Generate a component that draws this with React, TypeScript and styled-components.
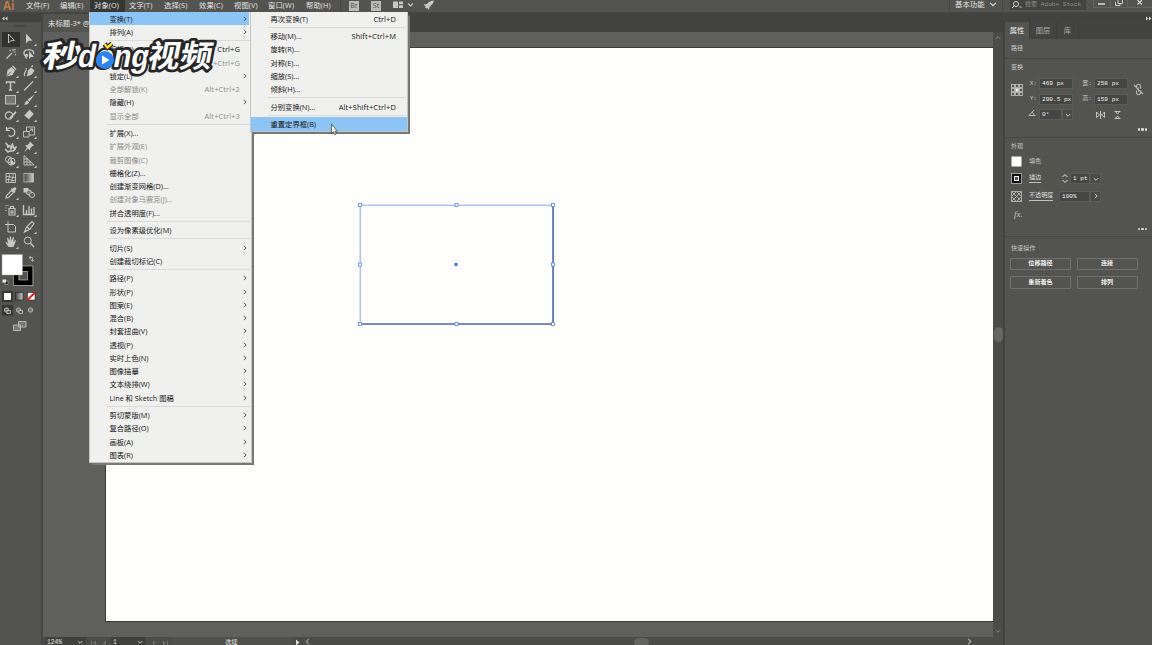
import React from "react";
import styled, { createGlobalStyle } from "styled-components";

const ui = `"Open Sans", "Noto Sans CJK SC", sans-serif`;
const pixel = `"Liberation Mono", "Noto Sans CJK SC", monospace`;

const GlobalStyle = createGlobalStyle`
  * { box-sizing: border-box; }
  html, body { margin: 0; height: 100%; overflow: hidden; background: #535350; }
  body { font-family: ${ui}; font-size: 7.3px; color: #e4e4e2; }
`;

const Window = styled.div`
  position: relative;
  display: flex;
  flex-direction: column;
  width: 1152px;
  height: 645px;
  overflow: hidden;
  background: #535350;
`;

/* ---------- top bar ---------- */
const TopBar = styled.header`
  display: flex;
  height: 14px;
  flex: none;
  border-bottom: 2px solid #444442;
  line-height: 11px;
  white-space: nowrap;
`;
const Logo = styled.div`
  width: 22px;
  padding-left: 3px;
  font: bold 11.5px/11px "Open Sans", sans-serif;
  color: #bd7a4e;
`;
const TopItem = styled.div<{ $w: number; $open?: boolean }>`
  width: ${(p) => p.$w}px;
  padding-left: 4px;
  height: 12px;
  letter-spacing: 0.1px;
  background: ${(p) => (p.$open ? "#363634" : "transparent")};
`;
const AppTile = styled.div`
  width: 10px;
  height: 10px;
  margin: 1px 12px 0 0;
  background: #bcbcba;
  color: #4c4c4a;
  font-size: 7px;
  line-height: 10px;
  text-align: center;
`;
const Divider = styled.div<{ $l: number; $r: number }>`
  width: 1px;
  height: 12px;
  margin: 0 ${(p) => p.$r}px 0 ${(p) => p.$l}px;
  background: #474745;
`;
const Spacer = styled.div`
  flex: 1;
`;
const Workspace = styled.div`
  width: 34px;
  font-size: 7.4px;
  line-height: 9px;
`;
const Search = styled.div`
  display: flex;
  width: 76px;
  height: 10px;
  margin-right: 7px;
  background: #434341;
  color: #8e8e8c;
  font: 6.1px/9px ${pixel};
  gap: 3px;
  padding-left: 1px;
`;
const WinButtons = styled.div`
  display: flex;
  width: 59px;
  height: 8px;
`;
const WinButton = styled.div<{ $w: number }>`
  width: ${(p) => p.$w}px;
  display: flex;
  justify-content: center;
  border: solid #646461;
  border-width: 0 0 1px 1px;
`;

/* ---------- body ---------- */
const Body = styled.div`
  display: flex;
  flex: 1;
  min-height: 0;
`;
const ToolPanel = styled.aside`
  width: 43px;
  border-right: 2px solid #444442;
`;
const PanelTop = styled.div<{ $end?: boolean }>`
  display: flex;
  justify-content: ${(p) => (p.$end ? "flex-end" : "flex-start")};
  height: 8px;
  padding: 2px 0 0 2px;
  background: #424240;
`;
const Grip = styled.div`
  width: 12px;
  height: 2px;
  margin: 3px 0 5px 14px;
  background: #454543;
`;
const ToolGroup = styled.div`
  display: grid;
  grid-template-columns: 18px 18px;
  grid-auto-rows: 14.6px;
  margin-left: 1.5px;
  padding-bottom: 0.8px;
  margin-bottom: 0.8px;
  border-bottom: 1px solid #4d4d4b;
`;
const Tool = styled.div<{ $on?: boolean }>`
  display: flex;
  align-items: center;
  justify-content: center;
  background: ${(p) => (p.$on ? "#313130" : "transparent")};
`;
const Center = styled.main`
  display: flex;
  flex-direction: column;
  width: 960px;
`;
const TabStrip = styled.div`
  height: 18px;
  background: #424240;
`;
const DocTab = styled.div`
  width: 90px;
  height: 18px;
  padding-left: 5px;
  background: #535350;
  line-height: 19px;
  font-size: 7.4px;
  white-space: nowrap;
`;
const Stage = styled.div`
  display: flex;
  height: 605px;
`;
const Canvas = styled.div`
  width: 950px;
  padding: 15px 0 0 62px;
  background: #5f5f5d;
`;
const Artboard = styled.div`
  position: relative;
  width: 888px;
  height: 575px;
  border: solid #3c3c3a;
  border-width: 1px 0 1px 1px;
  background: #fefefd;
`;
const Selection = styled.svg`
  position: absolute;
  left: 248px;
  top: 151px;
`;
const VScroll = styled.div`
  display: flex;
  flex-direction: column;
  align-items: center;
  justify-content: space-between;
  width: 10px;
  padding: 3px 0;
  background: #4b4b49;
`;
const Thumb = styled.div`
  width: 9px;
  height: 15px;
  border-radius: 5px;
  background: #666664;
`;
const Status = styled.footer`
  display: flex;
  height: 8px;
  overflow: hidden;
  background: #4b4b49;
  font: 6.3px/12px ${pixel};
  padding-left: 2px;
`;
const Field = styled.div<{ $w: number }>`
  width: ${(p) => p.$w}px;
  height: 8px;
  padding-left: 2px;
  background: #40403e;
`;
const Cell = styled.div<{ $w: number; $pad?: number; $bg?: string }>`
  width: ${(p) => p.$w}px;
  height: 8px;
  padding: 1px 0 0 ${(p) => p.$pad ?? 0}px;
  background: ${(p) => p.$bg ?? "transparent"};
`;
const HThumb = styled.div`
  width: 15px;
  height: 9px;
  margin: 1px 317px 0 323px;
  border-radius: 5px;
  background: #636361;
`;

/* ---------- properties ---------- */
const Props = styled.aside`
  width: 149px;
  border-left: 2px solid #424240;
  font: 6.1px/8px ${pixel};
  color: #c9c9c7;
`;
const Tabs = styled.div`
  display: flex;
  height: 17px;
  background: #434341;
  font: 7.3px/17px ${ui};
  color: #aaaaa8;
`;
const PanelTab = styled.div<{ $w: number; $on?: boolean }>`
  width: ${(p) => p.$w}px;
  text-align: center;
  border-right: 1px solid #3d3d3b;
  background: ${(p) => (p.$on ? "#535350" : "transparent")};
  color: ${(p) => (p.$on ? "#f2f2f0" : "inherit")};
`;
const Section = styled.section<{ $h: number }>`
  position: relative;
  display: flex;
  flex-direction: column;
  height: ${(p) => p.$h}px;
  padding: 5.5px 0 6px 6px;
  border-bottom: 1px solid #484846;
`;
const TransformGrid = styled.div`
  display: grid;
  grid-template-columns: 16px 12px 34px 21px 34px 20px;
  grid-template-rows: 16px 15.5px 15px;
  align-items: center;
  margin-top: 3.5px;
`;
const RefPoint = styled.div`
  grid-row: 1 / 3;
`;
const LinkCell = styled.div`
  grid-row: 1 / 3;
  grid-column: 6;
  padding-left: 5px;
`;
const Label = styled.div`
  text-align: right;
  padding-right: 2px;
`;
const Input = styled.div<{ $w: number }>`
  width: ${(p) => p.$w}px;
  height: 11px;
  padding-left: 2px;
  border: 0.5px solid #5b5b58;
  background: #454543;
  color: #f2f2f0;
  line-height: 9px;
  white-space: pre;
`;
const Combo = styled.div`
  display: flex;
  align-items: center;
`;
const Drop = styled.div`
  display: flex;
  width: 11px;
  height: 11px;
  align-items: center;
  justify-content: center;
  border: 0.5px solid #5b5b58;
  background: #4a4a48;
`;
const More = styled.div`
  display: flex;
  justify-content: flex-end;
  gap: 1px;
  margin-top: auto;
  padding-right: 5px;
`;
const Dot = styled.i`
  width: 2.4px;
  height: 2.4px;
  border-radius: 50%;
  background: #dededc;
`;
const LookRows = styled.div`
  margin-top: 2px;
`;
const LookRow = styled.div`
  display: grid;
  grid-template-columns: 18px 30px 1fr;
  align-items: center;
  height: 17.3px;
`;
const Fx = styled.div`
  height: 16px;
  padding: 3px 0 0 3px;
  font: italic 9px/12px "Liberation Serif", serif;
`;
const Link = styled.span`
  justify-self: start;
  border-bottom: 0.7px solid #c0c0be;
  line-height: 8px;
  white-space: nowrap;
  color: #dededc;
`;
const QuickSection = styled.section`
  padding: 8px 0 0 6px;
`;
const Actions = styled.div`
  display: grid;
  grid-template-columns: 61px 61px;
  gap: 6px 5.5px;
  margin: 4.5px 0 0 -1px;
`;
const Action = styled.button`
  height: 12.8px;
  padding: 0;
  border: 1px solid #70706d;
  border-radius: 1px;
  background: transparent;
  color: #f0f0ee;
  font: bold 6.1px/10px ${pixel};
`;

/* ---------- drop-down menus ---------- */
const Menu = styled.div<{ $x: number; $w: number; $h: number }>`
  position: absolute;
  left: ${(p) => p.$x}px;
  top: 12px;
  width: ${(p) => p.$w}px;
  height: ${(p) => p.$h}px;
  border: solid #c5c5c3;
  border-width: 0 1px 1px;
  background: #f0f0ef;
  box-shadow: 1.5px 1.5px 1px #777775;
  color: #161616;
`;
const Row = styled.div<{ $hot?: boolean; $dim?: boolean; $r: number }>`
  display: flex;
  align-items: center;
  height: 13.25px;
  margin-right: ${(p) => p.$r}px;
  padding: 0 ${(p) => 11 - p.$r}px 0 19.5px;
  background: ${(p) => (p.$hot ? "#8cc5f5" : "transparent")};
  color: ${(p) => (p.$dim ? "#8c8c8a" : "inherit")};
  white-space: nowrap;
  justify-content: space-between;
`;
const Key = styled.span`
  font-size: 7.45px;
  letter-spacing: 0.12px;
`;
const Rule = styled.div`
  height: 4.24px;
  margin: 0 1px 0 17px;
  display: flex;
  align-items: center;
  &::after {
    content: "";
    flex: 1;
    height: 1px;
    background: #dadad9;
  }
`;
const ArrowBox = styled.span`
  display: flex;
  margin-right: -7.5px;
`;
const Watermark = styled.svg`
  position: absolute;
  left: 38px;
  top: 24px;
`;
const Pointer = styled.svg`
  position: absolute;
  left: 330px;
  top: 123px;
`;

type Dir = "down" | "up" | "right" | "left";
const chevrons: Record<Dir, string> = {
  down: "M1 2.5 3.5 5 6 2.5",
  up: "M1 4.5 3.5 2 6 4.5",
  right: "M2.3 1 4.8 3.5 2.3 6",
  left: "M4.8 1 2.3 3.5 4.8 6",
};
const Chevron = ({ d = "down", c = "#d8d8d6", s = 7 }: { d?: Dir; c?: string; s?: number }) => (
  <svg width={s} height={s} viewBox="0 0 7 7" fill="none" stroke={c} strokeWidth="1.1">
    <path d={chevrons[d]} />
  </svg>
);

type Item = { t: string; k?: string; sub?: boolean; dim?: boolean; hot?: boolean } | null;
const s = (t: string): Item => ({ t, sub: true });
const objectMenu: Item[] = [
  { t: "变换(T)", sub: true, hot: true }, s("排列(A)"), null,
  { t: "编组(G)", k: "Ctrl+G" }, { t: "取消编组(U)", k: "Shift+Ctrl+G", dim: true }, s("锁定(L)"),
  { t: "全部解锁(K)", k: "Alt+Ctrl+2", dim: true }, s("隐藏(H)"), { t: "显示全部", k: "Alt+Ctrl+3", dim: true }, null,
  { t: "扩展(X)..." }, { t: "扩展外观(E)", dim: true }, { t: "裁剪图像(C)", dim: true }, { t: "栅格化(Z)..." },
  { t: "创建渐变网格(D)..." }, { t: "创建对象马赛克(J)...", dim: true }, { t: "拼合透明度(F)..." }, null,
  { t: "设为像素级优化(M)" }, null,
  s("切片(S)"), { t: "创建裁切标记(C)" }, null,
  s("路径(P)"), s("形状(P)"), s("图案(E)"), s("混合(B)"), s("封套扭曲(V)"), s("透视(P)"), s("实时上色(N)"),
  s("图像描摹"), s("文本绕排(W)"), s("Line 和 Sketch 图稿"), null,
  s("剪切蒙版(M)"), s("复合路径(O)"), s("画板(A)"), s("图表(R)"),
];
const transformMenu: Item[] = [
  { t: "再次变换(T)", k: "Ctrl+D" }, null,
  { t: "移动(M)...", k: "Shift+Ctrl+M" }, { t: "旋转(R)..." }, { t: "对称(E)..." }, { t: "缩放(S)..." }, { t: "倾斜(H)..." }, null,
  { t: "分别变换(N)...", k: "Alt+Shift+Ctrl+D" }, null,
  { t: "重置定界框(B)", hot: true },
];

const MenuRows = ({ items, r }: { items: Item[]; r: number }) => (
  <>
    {items.map((it, i) =>
      it ? (
        <Row key={i} $hot={it.hot} $dim={it.dim} $r={r}>
          <span>{it.t}</span>
          {it.k && <Key>{it.k}</Key>}
          {it.sub && <ArrowBox><Chevron d="right" c="#4a4a4a" s={6} /></ArrowBox>}
        </Row>
      ) : (
        <Rule key={i} />
      )
    )}
  </>
);

const F = "#c8c8c6";
const tools: Record<string, React.ReactNode> = {
  select: <path d="M4.5 2v9l2.3-2.4h3.6z" fill="none" stroke={F} strokeWidth="0.9" />,
  direct: <path d="M4 1.5v10l2.6-2.7h4z" fill={F} />,
  wand: <path d="M2.5 11.5 8 6M9 2v2M11.5 5h-2M5.5 3l1 1M12 8l-1-.8M11.5 2.2l-1 1" stroke={F} strokeWidth="1.2" />,
  lasso: <><path d="M5 9.5C1 8.500 1 4 4.500 3c4-1.200 8 .5 7 4M4 9.500c2 0 2-2 .5-2s-1 3 .2 4" fill="none" stroke={F} strokeWidth="1.300" /><path d="M7 4v8l2-2h3z" fill={F} /></>,
  pen: <><path d="M2.500 12.500 3.500 6l4-3 3.500 3.500-2.500 4.500z" fill={F} /><path d="m8.500 2 3.500 3.500" stroke={F} strokeWidth="1.500" /><path d="m3 12 3.500-4" stroke="#535350" strokeWidth=".8" /></>,
  curve: <><path d="m5 12.500 1-6 3-3 3.500 3-2.500 4z" fill={F} /><path d="M3 12c-3-4 3-4 1-8M9.500 3l1.500-1.500" fill="none" stroke={F} strokeWidth="1.100" /></>,
  type: <path d="M2.500 4.500V3h8v1.500M6.500 3v8M4.800 11h3.400" fill="none" stroke={F} strokeWidth="1.500" />,
  line: <path d="m2 11.500 9-9" stroke={F} strokeWidth="1.100" />,
  rect: <rect x="1.500" y="2.500" width="10" height="8.500" fill="#777774" stroke={F} strokeWidth=".9" />,
  brush: <path d="M12.500 1.500 7.500 8.500 5.500 6.800zM5 7.500 7 9c-.5 2.500-3 3-5 2.500C3 11 3 8.500 5 7.500" fill={F} />,
  shaper: <><circle cx="5" cy="7.500" r="3.700" fill="none" stroke={F} strokeWidth="1.200" /><path d="M5 10 11.500 3l1 1.500-6 6.500z" fill={F} /></>,
  eraser: <path d="M7.500 1.500 12 6l-5 5.500L2 7.500z" fill={F} stroke="#535350" strokeWidth=".4" />,
  rotate: <path d="M3 4.500C7 .5 12 5 10.500 9c-1 2.500-4 3-6 1.500M2.500 2v3.500H6" fill="none" stroke={F} strokeWidth="1.200" />,
  scale: <path d="M1.500 6.500h5.500V12H1.500zM4.500 6.500V2h8v8H7M7 6.500 10.500 4M8 4h2.500v2.500" fill="none" stroke={F} strokeWidth=".9" />,
  warp: <path d="M1.500 3c2 1 2.500 3 2.500 5 0-2 1-3.500 2-2l1 3c1-1 .5-4 1.500-5l1 4c1 .5 1.500-1 2.500-1-.5 2-2 3.500-3 4s-3.500-1-5 1l-3-3" fill="none" stroke={F} strokeWidth="1.500" />,
  pin: <path d="m8 1.500 4 4-1.500.5-2 2-.5 2.500-2-2L2 12.500 5 7.500l-2-2 2.500-.5 2-2z" fill={F} />,
  build: <><circle cx="4.500" cy="5.500" r="3" fill="none" stroke={F} /><circle cx="7.500" cy="7.500" r="3.500" fill="none" stroke={F} /><path d="M6.500 5v7l2-2h3z" fill={F} /></>,
  persp: <path d="M2 1.500V11h10zM2 5h4M2 8h7M5 4v7M8 7v4" fill="none" stroke={F} strokeWidth=".9" />,
  mesh: <path d="M2 2.500h9.500v9H2zM2 6c3-2 6 2 9.500 0M2 9c3-2 6 2 9.500 0M5 2.500c2 3-2 6 0 9M8.500 2.500c2 3-2 6 0 9" fill="none" stroke={F} strokeWidth=".9" />,
  grad: <><defs><linearGradient id="g"><stop stopColor="#444" /><stop offset="1" stopColor="#ccc" /></linearGradient></defs><rect x="2" y="2.500" width="9.500" height="8.500" fill="url(#g)" stroke={F} strokeWidth=".7" /></>,
  drop: <><path d="m2 12 .5-2.500L7.500 4.500l2 2-5 5z" fill="none" stroke={F} strokeWidth="1.100" /><path d="m6.500 3 4 4 1-1-.7-1c2-1 2-3 .7-3.500S9 2 8.700 3l-1-.8z" fill={F} /></>,
  blend: <><rect x="1.500" y="2" width="5" height="4.500" fill={F} /><circle cx="7" cy="6.500" r="2.500" fill="#777" stroke={F} /><circle cx="10" cy="9" r="2.500" fill="#535350" stroke={F} /></>,
  spray: <path d="M5 5.500h6V12H5zM6.500 5.500v-2h3v2M1.500 2.500h1M3.500 2.500h1M1.500 5h1M1.500 7.500h1M7 8h2v2H7z" fill="none" stroke={F} strokeWidth="1.100" />,
  chart: <path d="M1.500 2v9.500h11M4.500 11V7M7 11V3M9.500 11V5.500M12 11V4" fill="none" stroke={F} strokeWidth="1.300" />,
  board: <path d="M1 4.500h3M4 1.500v3M4 4.500h5.500l2 2V12H4z" fill="none" stroke={F} />,
  slice: <path d="m2.500 12 2-5L10 1.500 12 3.500 8 9zM5 7l2.500 2" fill="none" stroke={F} strokeWidth="1.100" />,
  hand: <path d="M4.500 12 1.500 7.500l1-.5L4 8.500 3 3l1-.2L5.500 6 6 1.500h1L7.500 6l1.500-4 1 .3L9.300 7l2-2 .7.600-2.500 6.400z" fill={F} />,
  zoom: <><circle cx="5.800" cy="5.500" r="3.500" fill="none" stroke={F} /><path d="m8.500 8.200 3.500 3.800" stroke={F} strokeWidth="1.500" /></>,
};
const noCorner = ["select", "wand", "lasso", "mesh", "grad", "blend", "board", "zoom"];
const groups = [
  ["select", "direct", "wand", "lasso"],
  ["pen", "curve", "type", "line", "rect", "brush", "shaper", "eraser"],
  ["rotate", "scale", "warp", "pin", "build", "persp"],
  ["mesh", "grad", "drop", "blend"],
  ["spray", "chart"],
  ["board", "slice", "hand", "zoom"],
];

const SwatchArt = () => (
  <svg width="41" height="84" viewBox="0 252 41 84">
    <path d="M16 268.500h14v14H16z" fill="none" stroke="#000" strokeWidth="5" />
    <path d="M19 271.500h8.500v8.500H19zM13.500 266h19.500v19.500H13.500z" fill="none" stroke="#c6c6c4" strokeWidth=".6" />
    <rect x="2" y="254.500" width="20.500" height="20.500" fill="#fff" stroke="#999" strokeWidth=".5" />
    <path d="M29.500 257.500h3v3.500M31 256l-2 1.500 2 1.500M31 260l1.500 1.500L34 260" fill="none" stroke="#b8b8b6" strokeWidth=".9" />
    <path d="M5 281h3v3.500H5z" fill="#222" stroke="#bbb" strokeWidth=".6" />
    <path d="M2.500 279.500h3.500v3H2.500z" fill="#eee" />
    <path d="M2 291h11v11H2zM2 305h11v10.500H2z" fill="#363634" />
    <rect x="4" y="293" width="7" height="7" fill="#fff" />
    <rect x="15.500" y="292.500" width="7.500" height="7.500" fill="url(#g)" stroke="#222" strokeWidth=".6" />
    <rect x="27.500" y="292.500" width="7.500" height="7.500" fill="#fff" stroke="#222" strokeWidth=".6" />
    <path d="m27.500 300 7.500-7.500" stroke="#e8201c" strokeWidth="2" />
    {[7, 19, 31].map((x, i) => (
      <g key={x} stroke="#c4c4c2" strokeWidth=".8">
        <circle cx={x - 0.5} cy="310" r="2.200" fill="#777" />
        {i < 2 && <rect x={x} y="310.500" width="3.500" height="3" fill="#555" />}
      </g>
    ))}
    <path d="M18.500 321.500h7.500v5.500h-7.500zM13.500 325h7v5.500h-7z" fill="#777" stroke="#c0c0be" strokeWidth=".9" />
  </svg>
);

const DoubleArrow = ({ right }: { right?: boolean }) => (
  <svg width="6" height="5" viewBox="0 0 6 5" fill="#cfcfcd">
    {right ? <path d="M0 .5 2.500 2.500 0 4.500zM3 .5 5.500 2.500 3 4.500z" /> : <path d="M2.500.5 0 2.500l2.500 2zM5.500.5 3 2.500l2.500 2z" />}
  </svg>
);
const Dots = () => <More><Dot /><Dot /><Dot /></More>;

export default function App() {
  const top: [string, number][] = [["文件(F)", 34], ["编辑(E)", 34], ["对象(O)", 35], ["文字(T)", 35], ["选择(S)", 35], ["效果(C)", 35], ["视图(V)", 34], ["窗口(W)", 38], ["帮助(H)", 37]];
  return (
    <Window>
      <GlobalStyle />
      <TopBar>
        <Logo>Ai</Logo>
        {top.map(([t, w]) => <TopItem key={t} $w={w} $open={t === "对象(O)"}>{t}</TopItem>)}
        <Divider $l={1} $r={8} />
        <AppTile>Br</AppTile>
        <AppTile>St</AppTile>
        <svg width="45" height="12" viewBox="391 0 45 12">
          <path d="M390.500 1.500h5.500v6.500h-5.500zM397 1.500h4v2.700h-4zM397 5.300h4V8h-4z" fill="#c8c8c6" />
          <path d="m406 3.500 2.500 2.500L411 3.500" fill="none" stroke="#c8c8c6" strokeWidth="1.200" />
          <path d="M432 .5c-3 0-5.500 1.500-7 3.500l-3.500.5 2 1.700-.5 1.300 1.500 1 1-.5 1.500 2 .8-3.500C430 5 431.500 3 432 .5" fill="#c8c8c6" />
        </svg>
        <Spacer />
        <Divider $l={0} $r={5} />
        <Workspace>基本功能</Workspace>
        <Chevron s={8} />
        <Divider $l={5} $r={7} />
        <Search>
          <svg width="11" height="10" viewBox="0 0 11 10" fill="none" stroke="#d2d2d0"><circle cx="5" cy="4" r="2.500" /><path d="M3.200 5.800 1 8M8.500 7h2" /></svg>
          搜索 Adobe Stock
        </Search>
        <WinButtons>
          <WinButton $w={17}><svg width="10" height="7"><path d="M1 4h7" stroke="#ddd" strokeWidth="1.500" /></svg></WinButton>
          <WinButton $w={17}><svg width="10" height="7" fill="none" stroke="#ccc"><path d="M4 0v3.500h4.500V0M1.500 2v3.500H6V3" /></svg></WinButton>
          <WinButton $w={25}><svg width="8" height="7"><path d="m1.500 0 4.500 4.500M6 0 1.500 4.500" stroke="#ddd" strokeWidth="1.100" /></svg></WinButton>
        </WinButtons>
      </TopBar>
      <Body>
        <ToolPanel>
          <PanelTop><DoubleArrow /></PanelTop>
          <Grip />
          {groups.map((g, i) => (
            <ToolGroup key={i}>
              {g.map((n) => (
                <Tool key={n} $on={n === "select"}>
                  <svg width="16" height="14" viewBox="-1 0 16 14">
                    {tools[n]}
                    {!noCorner.includes(n) && <path d="M14.500 11.500V14H12z" fill="#d0d0ce" />}
                  </svg>
                </Tool>
              ))}
            </ToolGroup>
          ))}
          <SwatchArt />
        </ToolPanel>
        <Center>
          <TabStrip><DocTab>未标题-3* @ 124%</DocTab></TabStrip>
          <Stage>
            <Canvas>
              <Artboard>
                <Selection width="206" height="130" viewBox="354 199 206 130">
                  <path d="M553 206v118H360" fill="none" stroke="#4b5878" strokeWidth="1.700" />
                  <path d="M360.200 205.200h192.600v118.600H360.200z" fill="none" stroke="#7f9be6" strokeWidth=".9" />
                  {[[360, 205], [456.500, 205], [553, 205], [360, 264.500], [553, 264.500], [360, 324], [456.500, 324], [553, 324]].map(([x, y]) => (
                    <rect key={`${x}-${y}`} x={x - 1.5} y={y - 1.5} width="3" height="3" fill="#fff" stroke="#5c80dd" strokeWidth=".8" />
                  ))}
                  <rect x="454.500" y="263" width="3" height="3" fill="#456be0" />
                </Selection>
              </Artboard>
            </Canvas>
            <VScroll>
              <Chevron d="up" c="#8d8d8b" s={6} />
              <Thumb />
              <Chevron c="#8d8d8b" s={6} />
            </VScroll>
          </Stage>
          <Status>
            <Field $w={30}>124%</Field>
            <Cell $w={11} $pad={2} $bg="#40403e"><Chevron s={6} /></Cell>
            <Cell $w={25} $pad={4}><svg width="18" height="8" fill="#6f6f6d"><path d="M1 2.500h1v5H1zM6 2.500v5L3 5zM16 2.500v5L13 5z" /></svg></Cell>
            <Field $w={23}>1</Field>
            <Cell $w={12} $pad={3} $bg="#40403e"><Chevron s={6} /></Cell>
            <Cell $w={26} $pad={6}><svg width="18" height="8" fill="#6f6f6d"><path d="M1 2.500v5L4 5zM11 2.500v5L14 5zM15 2.500h1v5h-1z" /></svg></Cell>
            <Cell $w={121} $pad={53} $bg="#4f4f4c">选择</Cell>
            <Cell $w={9} $pad={2}><svg width="6" height="7"><path d="M1 1.500v6l3.500-3z" fill="#ddd" /></svg></Cell>
            <Cell $w={9} $pad={2}><Chevron d="left" c="#999" s={7} /></Cell>
            <HThumb />
            <Cell $w={20}><Chevron d="right" c="#aaa" s={7} /></Cell>
          </Status>
        </Center>
        <Props>
          <PanelTop $end><DoubleArrow right /></PanelTop>
          <Tabs>
            <PanelTab $w={25} $on>属性</PanelTab>
            <PanelTab $w={27}>图层</PanelTab>
            <PanelTab $w={22}>库</PanelTab>
          </Tabs>
          <Section $h={19.5}>路径</Section>
          <Section $h={79}>
            变换
            <TransformGrid>
              <RefPoint>
                <svg width="12" height="12" viewBox="0 0 12 12" fill="none" stroke="#c6c6c4" strokeWidth=".8">
                  {[0.5, 4.5, 8.5].flatMap((x) => [0.5, 4.5, 8.5].map((y) => (
                    <rect key={`${x}${y}`} x={x} y={y} width="3" height="3" fill={x === 4.5 && y === 4.5 ? "#fff" : "none"} />
                  )))}
                </svg>
              </RefPoint>
              <Label>X:</Label><Input $w={34}>469 px</Input><Label>宽:</Label><Input $w={34}>258 px</Input>
              <LinkCell>
                <svg width="11" height="13" viewBox="0 0 11 13" fill="none" stroke="#b5b5b3" strokeWidth="1.100"><path d="M3.500 5.500v-2c0-3 4-3 4 0v2M3.500 7.500v2c0 3 4 3 4 0v-2M1 2l9 9M5.500 4.500v4" /></svg>
              </LinkCell>
              <Label>Y:</Label><Input $w={34}>290.5 px</Input><Label>高:</Label><Input $w={34}>159 px</Input>
              <span />
              <Label><svg width="9" height="8" fill="none" stroke="#c6c6c4" strokeWidth=".9"><path d="M6 1 1 6.500h6.500M4 3.500c1.500.5 2 1.500 2 3" /></svg></Label>
              <Combo><Input $w={23}>0°</Input><Drop><Chevron s={6} /></Drop></Combo>
              <span />
              <svg width="30" height="10" viewBox="0 0 30 10" fill="none" stroke="#d0d0ce" strokeWidth=".9"><path d="M2.500 2v5.500L5.500 5zM10.500 2v5.500L7.500 5z" /><path d="M6.500 1v8M20.500 1.500h6M20.500 8.500h6M21.500 1.500 23.500 4l2-2.500M21.500 8.500 23.500 6l2 2.500" /></svg>
            </TransformGrid>
            <Dots />
          </Section>
          <Section $h={99.5}>
            外观
            <LookRows>
              <LookRow>
                <svg width="11" height="11"><rect x=".5" y=".5" width="10" height="10" fill="#fff" /></svg>填色
              </LookRow>
              <LookRow>
                <svg width="11" height="11"><rect x=".5" y=".5" width="10" height="10" fill="#111" stroke="#ccc" strokeWidth=".7" /><rect x="3.500" y="3.500" width="4" height="4" fill="#555" stroke="#eee" /></svg>
                <Link>描边</Link>
                <Combo>
                  <svg width="11" height="11" fill="none" stroke="#ddd"><path d="M3.500 4 6 1.500 8.500 4M3.500 7 6 9.500 8.500 7" /></svg>
                  <Input $w={20}>1 pt</Input><Drop><Chevron s={6} /></Drop>
                </Combo>
              </LookRow>
              <LookRow>
                <svg width="11" height="11" fill="none" stroke="#b5b5b3" strokeWidth=".9"><path d="M.5.5h10v10H.5zM.5.500l10 10M10.500.500l-10 10M5.500.500l5 5-5 5-5-5z" /></svg>
                <Link>不透明度</Link>
                <Combo><Input $w={31}>100%</Input><Drop><Chevron d="right" s={6} /></Drop></Combo>
              </LookRow>
              <Fx>fx.</Fx>
            </LookRows>
            <Dots />
          </Section>
          <QuickSection>
            快速操作
            <Actions>
              <Action>位移路径</Action><Action>连接</Action>
              <Action>重新着色</Action><Action>排列</Action>
            </Actions>
          </QuickSection>
        </Props>
      </Body>
      <Menu $x={89} $w={163} $h={451}><MenuRows items={objectMenu} r={2} /></Menu>
      <Menu $x={250} $w={158} $h={120}><MenuRows items={transformMenu} r={0} /></Menu>
      <Pointer width="8" height="13" viewBox="0 0 8 13"><path d="M1.500 1v9.500l2-1.800 1.300 3 1.500-.7L5 8.200h2.300z" fill="#fff" stroke="#333" strokeWidth=".7" /></Pointer>
      <Watermark width="200" height="66" viewBox="38 24 200 66">
        <g fill="#fff" stroke="#262626" strokeWidth="5.500" strokeLinejoin="round" paintOrder="stroke" fontWeight="700" fontFamily='"Noto Sans CJK SC", sans-serif' transform="translate(11.500 0) skewX(-11)">
          <text x="43" y="67.500" fontSize="31" textLength="39" lengthAdjust="spacingAndGlyphs">秒</text>
          <text x="78" y="67" fontSize="32" fontFamily='"Liberation Sans", sans-serif' textLength="71" lengthAdjust="spacingAndGlyphs">dong</text>
          <text x="148" y="67.500" fontSize="31" textLength="64" lengthAdjust="spacingAndGlyphs">视频</text>
        </g>
        <circle cx="105" cy="60" r="9" fill="#2f83ea" />
        <path d="M102 55.500v9l7.500-4.500z" fill="#fff" />
        <path d="m104.500 44 3 3.500 4.500-4" fill="none" stroke="#262626" strokeWidth="5" />
        <path d="m104.500 44 3 3.500 4.500-4" fill="none" stroke="#f5dc2c" strokeWidth="2.500" />
      </Watermark>
    </Window>
  );
}
